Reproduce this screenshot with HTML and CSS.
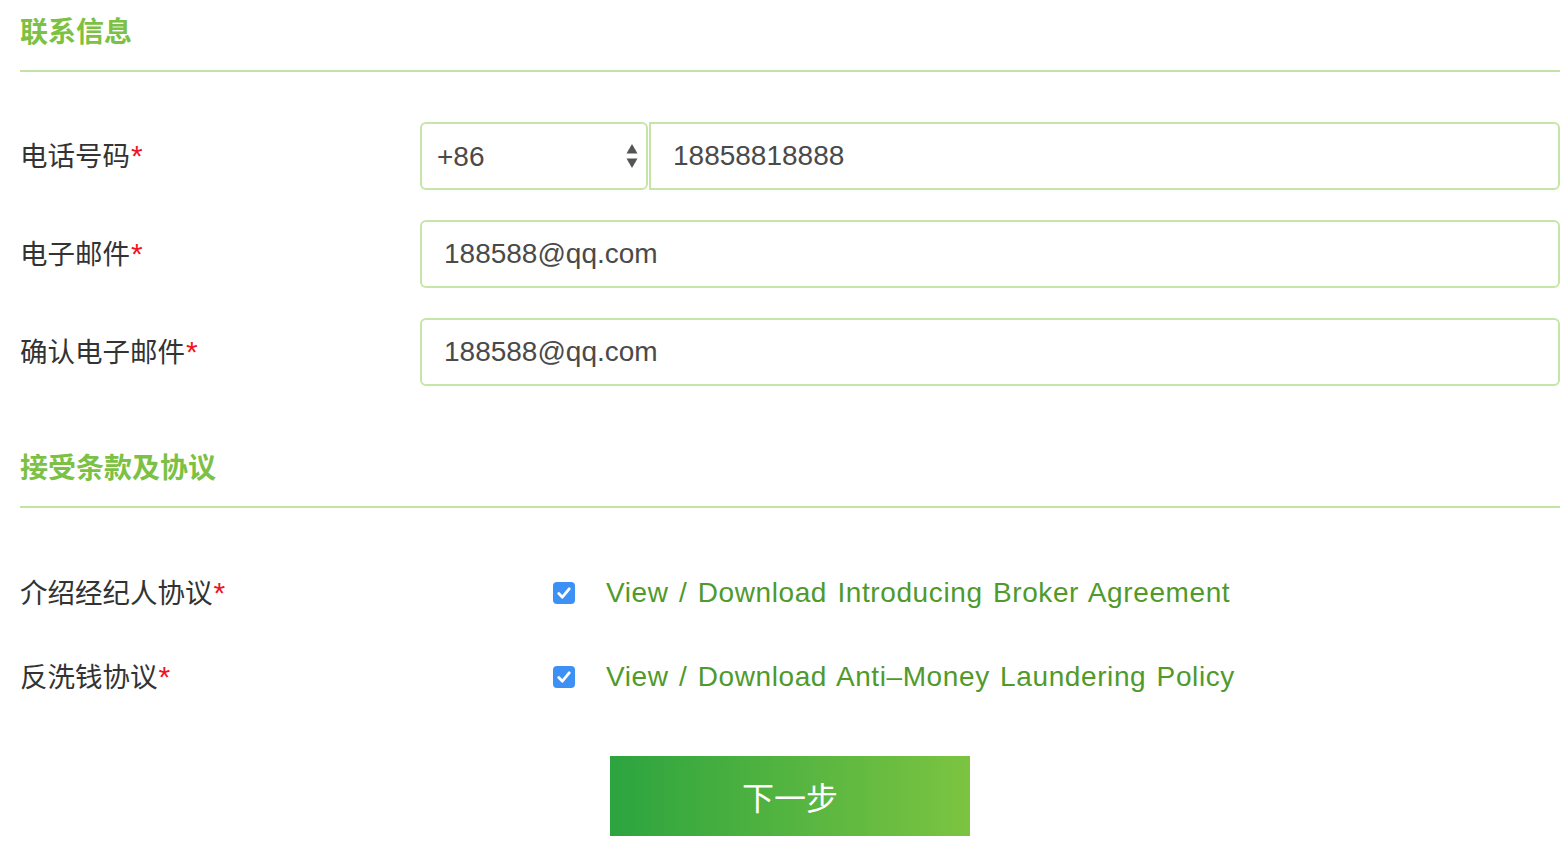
FILE: index.html
```html
<!DOCTYPE html>
<html lang="zh-CN">
<head>
    <meta charset="UTF-8">
    <meta name="viewport" content="width=device-width, initial-scale=1.0">
    <title>联系信息</title>
    <link rel="stylesheet" href="styles.css">
</head>
<body>
    <div class="page">
        <h2 class="section-title">联系信息</h2>

        <div class="form-row first">
            <label class="field-label">电话号码<span class="req">*</span></label>
            <div class="field phone">
                <div class="select-wrap">
                    <select class="code-select">
                        <option>+86</option>
                        <option>+852</option>
                        <option>+853</option>
                    </select>
                    <svg class="select-arrows" width="12" height="26" viewBox="0 0 12 26">
                        <path d="M6 1 L11.5 10.5 H0.5 Z" fill="#555"/>
                        <path d="M6 25 L11.5 15.5 H0.5 Z" fill="#555"/>
                    </svg>
                </div>
                <input class="text-input phone-input" type="text" value="18858818888">
            </div>
        </div>

        <div class="form-row">
            <label class="field-label">电子邮件<span class="req">*</span></label>
            <div class="field">
                <input class="text-input" type="text" value="188588@qq.com">
            </div>
        </div>

        <div class="form-row">
            <label class="field-label">确认电子邮件<span class="req">*</span></label>
            <div class="field">
                <input class="text-input" type="text" value="188588@qq.com">
            </div>
        </div>

        <h2 class="section-title second">接受条款及协议</h2>

        <div class="agree-row first">
            <span class="field-label">介绍经纪人协议<span class="req">*</span></span>
            <span class="check">
                <svg width="14" height="12" viewBox="0 0 14 12"><path d="M1.8 6.6 L5.4 10.2 L12.2 1.8" fill="none" stroke="#fff" stroke-width="2.8" stroke-linecap="round" stroke-linejoin="round"/></svg>
            </span>
            <a class="doc-link" href="#">View / Download Introducing Broker Agreement</a>
        </div>

        <div class="agree-row">
            <span class="field-label">反洗钱协议<span class="req">*</span></span>
            <span class="check">
                <svg width="14" height="12" viewBox="0 0 14 12"><path d="M1.8 6.6 L5.4 10.2 L12.2 1.8" fill="none" stroke="#fff" stroke-width="2.8" stroke-linecap="round" stroke-linejoin="round"/></svg>
            </span>
            <a class="doc-link" href="#">View / Download Anti–Money Laundering Policy</a>
        </div>

        <div class="actions">
            <button class="next-btn" type="button">下一步</button>
        </div>
    </div>
</body>
</html>
```

FILE: styles.css
```css
body {
    margin: 0;
    padding: 0;
    background: #fff;
    font-family: "Liberation Sans", "Noto Sans CJK SC", sans-serif;
    color: #333;
}
.page {
    padding: 0 4px 0 20px;
}
.section-title {
    margin: 0;
    font-family: "Noto Sans CJK SC", sans-serif;
    font-size: 28px;
    font-weight: bold;
    color: #7cc144;
    line-height: 60px;
    padding-bottom: 10px;
    border-bottom: 2px solid #c3e3a3;
}
.section-title.second {
    margin-top: 50px;
}
.form-row {
    display: flex;
    align-items: center;
    height: 68px;
    margin-bottom: 30px;
}
.form-row.first {
    margin-top: 50px;
}
.field-label {
    width: 400px;
    flex-shrink: 0;
    font-family: "Noto Sans CJK SC", sans-serif;
    font-size: 27.5px;
    line-height: 40px;
    color: #333;
    margin-top: -3px;
}
.req {
    color: #f0141e;
    font-family: "Liberation Sans", sans-serif;
    font-size: 30px;
    margin-left: 1px;
}
.field {
    flex: 1;
    display: flex;
    height: 100%;
}
.text-input {
    flex: 1;
    min-width: 0;
    box-sizing: border-box;
    height: 68px;
    border: 2px solid #c5e6a6;
    border-radius: 6px;
    padding: 0 22px;
    font-family: "Liberation Sans", sans-serif;
    font-size: 28px;
    color: #4a4a4a;
    outline: none;
}
.phone-input {
    border-radius: 0 6px 6px 0;
}
.select-wrap {
    position: relative;
    width: 228px;
    margin-right: 1px;
}
.code-select {
    appearance: none;
    -webkit-appearance: none;
    width: 100%;
    height: 68px;
    box-sizing: border-box;
    border: 2px solid #c5e6a6;
    border-radius: 6px;
    background: #fff;
    padding: 0 15px;
    font-family: "Liberation Sans", sans-serif;
    font-size: 28px;
    color: #4a4a4a;
    outline: none;
}
.select-arrows {
    position: absolute;
    right: 10px;
    top: 21px;
    pointer-events: none;
}
.agree-row {
    display: flex;
    align-items: center;
    height: 84px;
}
.agree-row.first {
    margin-top: 43px;
}
.check {
    width: 22px;
    height: 22px;
    margin-left: 133px;
    margin-right: 31px;
    border-radius: 4px;
    background: #3d91f5;
    display: flex;
    align-items: center;
    justify-content: center;
    flex-shrink: 0;
}
.doc-link {
    font-family: "Liberation Sans", sans-serif;
    font-size: 28px;
    letter-spacing: 0.6px;
    word-spacing: 2px;
    color: #4f9a2b;
    text-decoration: none;
}
.actions {
    display: flex;
    justify-content: center;
    margin-top: 37px;
}
.next-btn {
    width: 360px;
    height: 80px;
    border: none;
    background: linear-gradient(to right, #2ca43f, #7cc441);
    color: #fff;
    font-family: "Noto Sans CJK SC", sans-serif;
    font-size: 32px;
    cursor: pointer;
}
```
